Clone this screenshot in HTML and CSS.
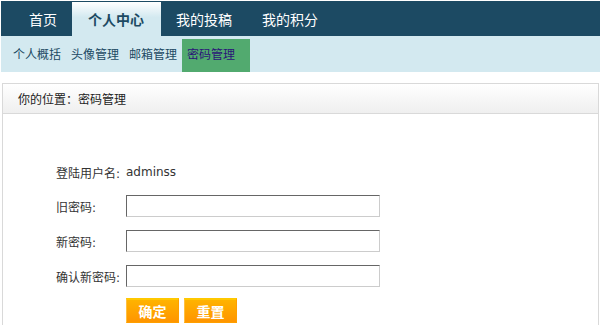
FILE: index.html
```html
<!DOCTYPE html>
<html lang="zh-CN">
<head>
    <meta charset="UTF-8">
    <meta name="viewport" content="width=device-width, initial-scale=1.0">
    <title>密码管理</title>
    <link rel="stylesheet" href="styles.css">
</head>
<body>
    <div class="nav">
        <ul>
            <li><a href="#">首页</a></li>
            <li class="on"><a href="#">个人中心</a></li>
            <li><a href="#">我的投稿</a></li>
            <li><a href="#">我的积分</a></li>
        </ul>
    </div>
    <div class="subnav">
        <ul>
            <li><a href="#">个人概括</a></li>
            <li><a href="#">头像管理</a></li>
            <li><a href="#">邮箱管理</a></li>
            <li class="on"><a href="#">密码管理</a></li>
        </ul>
    </div>

    <div class="panel">
        <div class="panel-head">你的位置：密码管理</div>
        <div class="panel-body">
            <form class="pwd-form">
                <div class="row">
                    <span class="label">登陆用户名:</span>
                    <span class="value">adminss</span>
                </div>
                <div class="row">
                    <label class="label" for="oldpwd">旧密码:</label>
                    <input type="password" id="oldpwd" class="txt">
                </div>
                <div class="row">
                    <label class="label" for="newpwd">新密码:</label>
                    <input type="password" id="newpwd" class="txt">
                </div>
                <div class="row">
                    <label class="label" for="repwd">确认新密码:</label>
                    <input type="password" id="repwd" class="txt">
                </div>
                <div class="row btns">
                    <span class="label"></span>
                    <div class="btn-group">
                        <button type="submit" class="btn">确定</button>
                        <button type="reset" class="btn">重置</button>
                    </div>
                </div>
            </form>
        </div>
    </div>
</body>
</html>
```

FILE: styles.css
```css
body {
    margin: 0;
    padding: 1px 0 0 1px;
    background-color: #fff;
    font-family: "DejaVu Sans", "Noto Sans CJK SC", sans-serif;
    font-size: 12px;
    color: #333;
}

ul {
    list-style: none;
    margin: 0;
    padding: 0;
}

a {
    text-decoration: none;
}

/* top navigation */
.nav {
    height: 35px;
    background-color: #1c4a63;
}

.nav ul {
    display: flex;
    padding: 1px 0 0 13px;
}

.nav li a {
    display: block;
    height: 34px;
    line-height: 36px;
    padding: 0 15px;
    font-size: 14px;
    color: #fff;
}

.nav li.on a {
    padding: 0 17px 0 16px;
    font-weight: bold;
    color: #1c4a63;
    background: linear-gradient(#ffffff, #d3e9f0 45%);
}

/* second level navigation */
.subnav {
    height: 36px;
    background-color: #d3e9f0;
}

.subnav ul {
    display: flex;
    padding: 3px 0 0 7px;
}

.subnav li a {
    display: block;
    height: 33px;
    line-height: 33px;
    padding: 0 5px;
    color: #1c4a63;
}

.subnav li.on a {
    padding: 0 15px 0 5px;
    background-color: #52aa6f;
    color: #2a1478;
}

/* content panel */
.panel {
    margin: 11px 0 0 1px;
    width: 595px;
    border: 1px solid #d9d9d9;
    height: 260px;
}

.panel-head {
    height: 29px;
    line-height: 30px;
    padding-left: 15px;
    border-bottom: 1px solid #d9d9d9;
    background: linear-gradient(#ffffff, #efefef);
    color: #222;
    font-family: "Noto Sans CJK SC", sans-serif;
}

.panel-body {
    padding: 47px 0 0 53px;
}

.pwd-form .row {
    display: flex;
    align-items: center;
    height: 22px;
    margin-bottom: 13px;
}

.pwd-form .row:first-child {
    margin-bottom: 12px;
}

.pwd-form .label {
    width: 70px;
    flex: none;
}

.pwd-form .value {
    font-size: 12px;
    color: #333;
}

.txt {
    width: 250px;
    height: 18px;
    padding: 1px 1px;
    border: 1px solid #cccccc;
    border-top-color: #666;
    border-left-color: #666;
    margin: 0;
    font-size: 12px;
}

.btns {
    margin-top: -2px;
}

.btn-group {
    display: flex;
    gap: 5px;
    padding-top: 3px;
}

.btn {
    width: 53px;
    height: 25px;
    padding: 0;
    border: 1px solid #ff9f00;
    border-top: 2px solid #ffc800;
    border-left-color: #ffc040;
    background: linear-gradient(#ffb300, #ff9500);
    color: #fff;
    font-family: "Noto Sans CJK SC", sans-serif;
    font-size: 14px;
    font-weight: bold;
    cursor: pointer;
}
```
